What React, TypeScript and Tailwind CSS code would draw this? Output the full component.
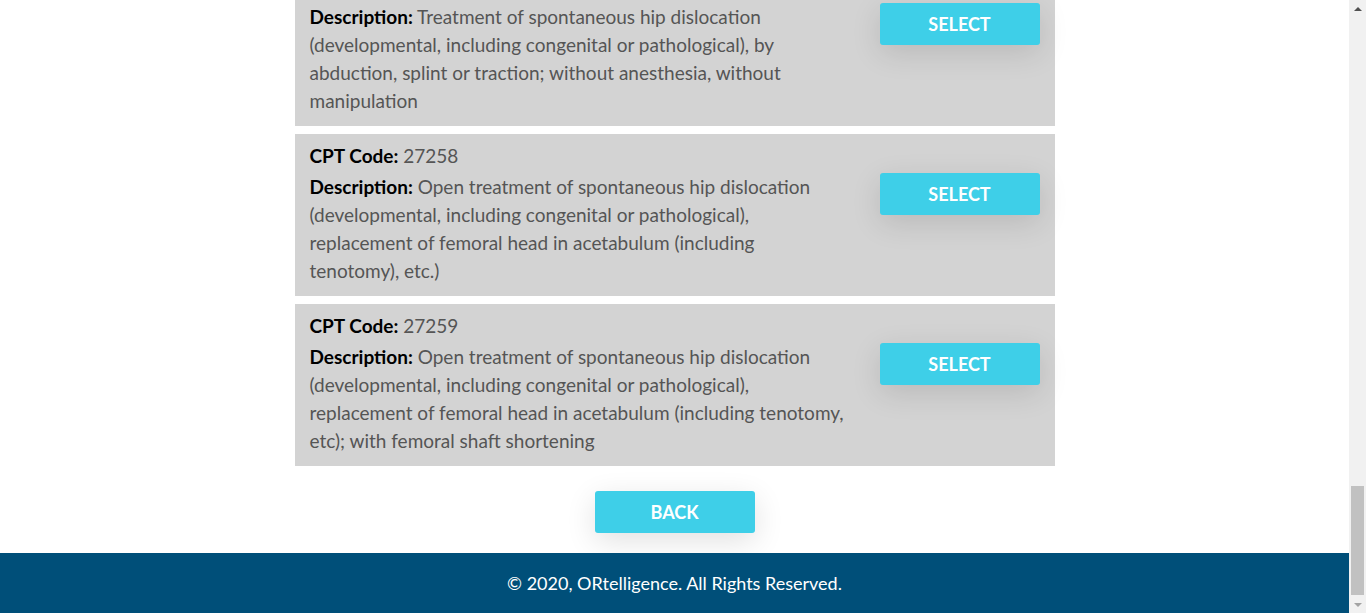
const codes = [
  {
    code: "27256",
    desc: "Treatment of spontaneous hip dislocation (developmental, including congenital or pathological), by abduction, splint or traction; without anesthesia, without manipulation",
  },
  {
    code: "27258",
    desc: "Open treatment of spontaneous hip dislocation (developmental, including congenital or pathological), replacement of femoral head in acetabulum (including tenotomy), etc.)",
  },
  {
    code: "27259",
    desc: "Open treatment of spontaneous hip dislocation (developmental, including congenital or pathological), replacement of femoral head in acetabulum (including tenotomy, etc); with femoral shaft shortening",
  },
];

function CodeCard({ code, desc }: { code: string; desc: string }) {
  return (
    <div className="flex bg-[#d3d3d3] pl-[15px] pr-[15px] pt-2 pb-[11px]">
      <div className="w-[536px] text-[19px] leading-[28px] text-[#555]">
        <div className="mb-[3px]">
          <span className="font-bold text-black">CPT Code:</span> {code}
        </div>
        <div>
          <span className="font-bold text-black">Description:</span> {desc}
        </div>
      </div>
      <div className="ml-auto pt-[31px]">
        <button className="w-[160px] h-[42px] rounded-[3px] bg-[#3ecfe8] text-white font-bold text-[18px] shadow-[0_8px_30px_rgba(0,0,0,0.12)]">
          SELECT
        </button>
      </div>
    </div>
  );
}

function Scrollbar() {
  return (
    <div className="w-[17px] h-full bg-[#f1f1f1] flex flex-col items-center">
      <div className="h-[17px] flex items-center justify-center">
        <div className="w-0 h-0 border-l-[4px] border-r-[4px] border-b-[4px] border-l-transparent border-r-transparent border-b-[#505050]" />
      </div>
      <div className="flex-1 w-full flex flex-col">
        <div className="flex-1" />
        <div className="mx-[2px] h-[109px] bg-[#c1c1c1]" />
        <div className="h-[1px]" />
      </div>
      <div className="h-[17px] flex items-center justify-center">
        <div className="w-0 h-0 border-l-[4px] border-r-[4px] border-t-[4px] border-l-transparent border-r-transparent border-t-[#a3a3a3]" />
      </div>
    </div>
  );
}

export default function App() {
  return (
    <div className="flex h-[613px] overflow-hidden bg-white" style={{ fontFamily: "Lato, 'Open Sans', sans-serif" }}>
      <div className="flex-1 flex flex-col">
        <div className="flex-1 flex flex-col items-center">
          <div className="w-[760px] mt-[-36px] flex flex-col gap-2">
            {codes.map((c) => (
              <CodeCard key={c.code} code={c.code} desc={c.desc} />
            ))}
          </div>
          <button className="mt-[25px] w-[160px] h-[42px] rounded-[3px] bg-[#3ecfe8] text-white font-bold text-[18px] shadow-[0_8px_30px_rgba(0,0,0,0.12)]">
            BACK
          </button>
        </div>
        <footer className="h-[60px] bg-[#004f79] flex items-center justify-center text-white text-[18px]">
          © 2020, ORtelligence. All Rights Reserved.
        </footer>
      </div>
      <Scrollbar />
    </div>
  );
}
